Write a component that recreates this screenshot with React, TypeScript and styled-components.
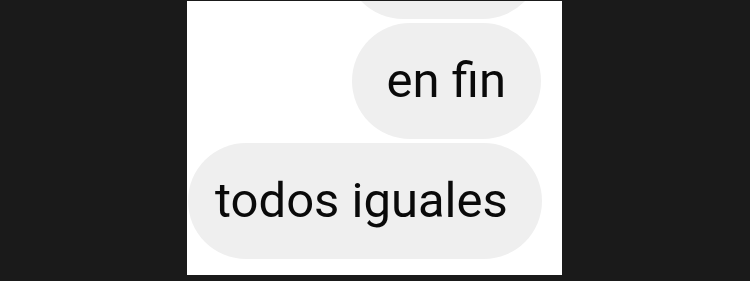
import React from "react"
import styled, { createGlobalStyle } from "styled-components"

const GlobalStyle = createGlobalStyle`
  html, body {
    margin: 0;
    padding: 0;
    background: #1a1a1a;
  }
`

const Page = styled.div`
  width: 750px;
  height: 281px;
  display: flex;
  justify-content: flex-start;
  align-items: flex-start;
  padding: 1px 0 0 187px;
  box-sizing: border-box;
  background: #1a1a1a;
`

const Chat = styled.div`
  width: 375px;
  height: 274px;
  background: #ffffff;
  display: flex;
  flex-direction: column;
  justify-content: flex-end;
  gap: 4px;
  padding: 0 21px 16px 1px;
  box-sizing: border-box;
  overflow: hidden;
`

const Row = styled.div<{ $mine?: boolean }>`
  display: flex;
  flex-shrink: 0;
  justify-content: ${(p) => (p.$mine ? "flex-end" : "flex-start")};
`

const Bubble = styled.div<{ $width?: number }>`
  height: 116px;
  border-radius: 58px;
  background: #efefef;
  display: flex;
  align-items: center;
  padding: 0 34px 2px 27px;
  box-sizing: border-box;
  ${(p) => p.$width && `width: ${p.$width}px;`}
  font-family: Roboto, "Noto Sans", sans-serif;
  font-size: 49px;
  color: #0a0a0a;
  white-space: nowrap;
`

const MineBubble = styled(Bubble)`
  padding: 0 35px 2px 35px;
`

export default function App() {
  return (
    <>
      <GlobalStyle />
      <Page>
        <Chat>
          <Row $mine>
            <MineBubble $width={196} />
          </Row>
          <Row $mine>
            <MineBubble>en fin</MineBubble>
          </Row>
          <Row>
            <Bubble>todos iguales</Bubble>
          </Row>
        </Chat>
      </Page>
    </>
  )
}
